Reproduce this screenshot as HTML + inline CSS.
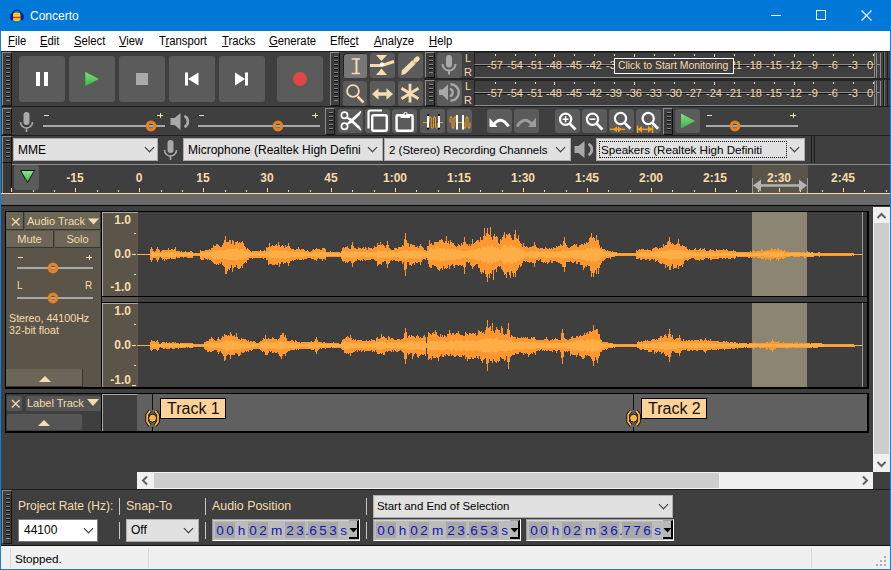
<!DOCTYPE html>
<html><head><meta charset="utf-8">
<style>
*{margin:0;padding:0;box-sizing:border-box}
html,body{width:891px;height:570px;overflow:hidden;background:#3f3f3f}
body{font-family:"Liberation Sans",sans-serif;position:relative}
.a{position:absolute}
.grab{position:absolute;width:10px;border-left:1px solid #8c8c8c;border-top:1px solid #8c8c8c;border-right:1px solid #141414;border-bottom:1px solid #141414;background-color:#3a3a3a;padding:3px 0 4px 0;
 background-image:linear-gradient(#8a8a8a 0,#8a8a8a 1px,#0a0a0a 1px,#0a0a0a 2px,transparent 2px);background-size:4px 4px;background-repeat:repeat-y;background-position:3px 0;background-origin:content-box;background-clip:content-box}
.menu span{position:absolute;top:35px;font-size:12px;color:#000;line-height:12px;transform:scaleX(0.94);transform-origin:0 0}
.lbl{color:#f6dcad}
.combo{position:absolute;background:#e1e1e1;border:1px solid #adadad;font-size:12px;color:#000;line-height:20px;padding-left:3px;white-space:nowrap;overflow:hidden}
.chev{position:absolute;width:7px;height:7px;border-right:1px solid #333;border-bottom:1px solid #333;transform:rotate(45deg)}
.tc{position:absolute;font-size:12px;color:#f6dcad;font-weight:bold;text-align:center;width:40px;line-height:12px}
</style></head><body>
<div class="a" style="left:0px;top:0px;width:891px;height:31px;background:#0078d7"></div><svg class="a" style="left:8px;top:7px" width="17" height="16" viewBox="0 0 17 16">
 <path d="M3.8 10.5A5.1 7.6 0 0 1 14 10.5" fill="none" stroke="#0c1c80" stroke-width="1.4"/>
 <rect x="5" y="5.8" width="7.4" height="8.2" rx="2.2" fill="#ffda10"/>
 <path d="M6 7.5H11.5M6 12.5H11.5" stroke="#ffc000" stroke-width="1"/>
 <path d="M5 10.5H12.4" stroke="#e83010" stroke-width="1.5"/>
 <ellipse cx="3.7" cy="10" rx="1.5" ry="3.4" fill="#0a1aa0"/>
 <ellipse cx="14.2" cy="10" rx="1.5" ry="3.4" fill="#0a1aa0"/>
</svg><div class="a" style="left:30px;top:10px;white-space:nowrap;font-size:12px;color:#fff;line-height:12px">Concerto</div><div class="a" style="left:771px;top:15px;width:10px;height:1px;background:#fff"></div><div class="a" style="left:816px;top:10px;width:10px;height:10px;border:1px solid #fff"></div><svg class="a" style="left:861px;top:10px" width="11" height="11"><path d="M0.5 0.5L10.5 10.5M10.5 0.5L0.5 10.5" stroke="#fff" stroke-width="1.1"/></svg><div class="a" style="left:0px;top:31px;width:891px;height:20px;background:#fff"></div><div class="menu">
<span style="left:8px"><u>F</u>ile</span>
<span style="left:40px"><u>E</u>dit</span>
<span style="left:74px"><u>S</u>elect</span>
<span style="left:119px"><u>V</u>iew</span>
<span style="left:159px">T<u>r</u>ansport</span>
<span style="left:222px"><u>T</u>racks</span>
<span style="left:269px"><u>G</u>enerate</span>
<span style="left:330px">Effe<u>c</u>t</span>
<span style="left:374px"><u>A</u>nalyze</span>
<span style="left:429px"><u>H</u>elp</span>
</div><div class="a" style="left:1px;top:51px;width:889px;height:1px;background:#1e1e1e"></div><div class="grab" style="left:2px;top:52px;height:54px"></div><div class="a" style="left:19px;top:56px;width:46px;height:46px;background:#5b5b5b;border-radius:3px"></div><div class="a" style="left:69px;top:56px;width:46px;height:46px;background:#5b5b5b;border-radius:3px"></div><div class="a" style="left:119px;top:56px;width:46px;height:46px;background:#5b5b5b;border-radius:3px"></div><div class="a" style="left:169px;top:56px;width:46px;height:46px;background:#5b5b5b;border-radius:3px"></div><div class="a" style="left:219px;top:56px;width:46px;height:46px;background:#5b5b5b;border-radius:3px"></div><div class="a" style="left:277px;top:56px;width:46px;height:46px;background:#5b5b5b;border-radius:3px"></div><div class="grab" style="left:330px;top:52px;height:54px"></div><div class="a" style="left:1px;top:106px;width:889px;height:1px;background:#1e1e1e"></div><div class="grab" style="left:2px;top:108px;height:27px"></div><div class="a" style="left:1px;top:135px;width:889px;height:1px;background:#1e1e1e"></div><div class="grab" style="left:2px;top:136px;height:27px"></div><div class="a" style="left:36px;top:72px;width:4px;height:14px;background:#fff"></div><div class="a" style="left:44px;top:72px;width:4px;height:14px;background:#fff"></div><svg class="a" style="left:84px;top:71px" width="17" height="17"><defs><linearGradient id="gp" x1="0" y1="0" x2="0" y2="1"><stop offset="0" stop-color="#80e080"/><stop offset="1" stop-color="#40b04a"/></linearGradient></defs><path d="M1 0.5 L15.5 8 L1 15.5Z" fill="url(#gp)" stroke="#2f7a36" stroke-width="0.6"/></svg><div class="a" style="left:136px;top:73px;width:12px;height:12px;background:#a9a9a9"></div><svg class="a" style="left:184px;top:72px" width="16" height="15"><rect x="1" y="0.5" width="3" height="13" fill="#fff"/><path d="M4 7 L14.5 0.5 L14.5 13.5Z" fill="#fff"/></svg><svg class="a" style="left:234px;top:72px" width="16" height="15"><rect x="11" y="0.5" width="3" height="13" fill="#fff"/><path d="M11 7 L1 0.5 L1 13.5Z" fill="#fff"/></svg><div class="a" style="left:293px;top:72px;width:14px;height:14px;border-radius:50%;background:#e24545"></div><div class="a" style="left:343px;top:53px;width:24px;height:25px;background:#777;border-radius:3px;box-shadow:inset 1px 1px 0 #222"></div><div class="a" style="left:370px;top:53px;width:25px;height:25px;background:#5b5b5b;border-radius:3px"></div><div class="a" style="left:398px;top:53px;width:25px;height:25px;background:#5b5b5b;border-radius:3px"></div><div class="a" style="left:343px;top:81px;width:24px;height:25px;background:#5b5b5b;border-radius:3px"></div><div class="a" style="left:370px;top:81px;width:25px;height:25px;background:#5b5b5b;border-radius:3px"></div><div class="a" style="left:398px;top:81px;width:25px;height:25px;background:#5b5b5b;border-radius:3px"></div><svg class="a" style="left:340px;top:50px" width="90" height="60" fill="#f6ddb0" stroke="#f6ddb0">
 <path d="M11.7 9H20.1M11.7 23.5H20.1" stroke-width="1.6" fill="none"/><path d="M16.5 8.5V24" stroke-width="2" fill="none"/>
 <path d="M36 5H47L41.5 11Z M36 25H47L41.5 18.6Z" stroke="none"/>
 <path d="M30 15.5H42L54 11.5" stroke-width="3" fill="none"/>
 <circle cx="42" cy="14.2" r="2" fill="#fff" stroke="none"/>
 <path d="M61.3 25.2L61.8 20.6L72.3 10.3L75.7 13.7L65.6 23.8Z" stroke="none"/>
 <path d="M75.6 10.4L77.4 8.6" stroke-width="4.6" stroke-linecap="round" fill="none"/>
 <circle cx="13" cy="41" r="5.9" fill="none" stroke-width="1.8"/>
 <path d="M17.5 46.5L23.5 52.5" stroke-width="2.5" fill="none"/>
 <path d="M32 44L38.5 38.2V49.8Z M53 44L46.5 38.2V49.8Z" stroke="none"/>
 <path d="M37 44H48" stroke-width="3.5" fill="none"/>
 <path d="M70 33.8V52.6M61.5 38.3L78.5 48.8M61.5 48.8L78.5 38.3" stroke-width="2.8" fill="none"/>
</svg><div class="grab" style="left:425px;top:52px;height:26px"></div><div class="grab" style="left:425px;top:80px;height:26px"></div><div class="a" style="left:424px;top:78px;width:466px;height:2px;background:#262626"></div><div class="a" style="left:437px;top:53px;width:25px;height:25px;background:#5b5b5b;border-radius:3px"></div><div class="a" style="left:437px;top:81px;width:25px;height:25px;background:#5b5b5b;border-radius:3px"></div><svg class="a" style="left:437px;top:53px" width="25" height="25" fill="#a9a9a9" stroke="#a9a9a9">
 <rect x="9" y="2" width="6" height="12.5" rx="3" stroke="none"/>
 <path d="M5.5 11 A6.5 6.5 0 0 0 18.5 11" fill="none" stroke-width="2"/>
 <path d="M12 17V21.5" stroke-width="2"/>
</svg>
<svg class="a" style="left:437px;top:81px" width="25" height="25" fill="#a9a9a9" stroke="#a9a9a9">
 <path d="M2 8.5H5.5L11 3.5V19.5L5.5 14H2Z" stroke="none"/>
 <path d="M12.8 7.8A3.8 3.8 0 0 1 12.8 15.2" fill="none" stroke-width="2.4"/>
 <path d="M13.5 3.2A8.3 8.3 0 0 1 13.5 19.8" fill="none" stroke-width="2.4"/>
</svg><div class="a" style="left:465px;top:53px;white-space:nowrap;font-size:11px;line-height:11px;color:#f6ddb0">L</div><div class="a" style="left:464px;top:67px;white-space:nowrap;font-size:11px;line-height:11px;color:#f6ddb0">R</div><div class="a" style="left:465px;top:81px;white-space:nowrap;font-size:11px;line-height:11px;color:#f6ddb0">L</div><div class="a" style="left:464px;top:95px;white-space:nowrap;font-size:11px;line-height:11px;color:#f6ddb0">R</div><div class="a" style="left:474px;top:52px;width:401px;height:13px;border-left:1px solid #222;border-top:1px solid #222;border-bottom:1px solid #8c8c8c;border-right:1px solid #8c8c8c;background:#3f3f3f"></div><div class="a" style="left:474px;top:65px;width:401px;height:13px;border-left:1px solid #222;border-top:1px solid #111;border-bottom:1px solid #8c8c8c;border-right:1px solid #8c8c8c;background:#3f3f3f"></div><div class="a" style="left:495px;top:54px;width:1px;height:2px;background:#f6ddb0"></div><div class="a lbl" style="left:480px;top:59px;width:30px;text-align:center;font-size:11px;line-height:12px">-57</div><div class="a" style="left:515px;top:54px;width:1px;height:2px;background:#f6ddb0"></div><div class="a lbl" style="left:500px;top:59px;width:30px;text-align:center;font-size:11px;line-height:12px">-54</div><div class="a" style="left:535px;top:54px;width:1px;height:2px;background:#f6ddb0"></div><div class="a lbl" style="left:520px;top:59px;width:30px;text-align:center;font-size:11px;line-height:12px">-51</div><div class="a" style="left:554px;top:54px;width:1px;height:3px;background:#f6ddb0"></div><div class="a lbl" style="left:539px;top:59px;width:30px;text-align:center;font-size:11px;line-height:12px">-48</div><div class="a" style="left:574px;top:54px;width:1px;height:2px;background:#f6ddb0"></div><div class="a lbl" style="left:559px;top:59px;width:30px;text-align:center;font-size:11px;line-height:12px">-45</div><div class="a" style="left:594px;top:54px;width:1px;height:2px;background:#f6ddb0"></div><div class="a lbl" style="left:579px;top:59px;width:30px;text-align:center;font-size:11px;line-height:12px">-42</div><div class="a" style="left:614px;top:54px;width:1px;height:2px;background:#f6ddb0"></div><div class="a lbl" style="left:599px;top:59px;width:30px;text-align:center;font-size:11px;line-height:12px">-39</div><div class="a" style="left:634px;top:54px;width:1px;height:3px;background:#f6ddb0"></div><div class="a lbl" style="left:619px;top:59px;width:30px;text-align:center;font-size:11px;line-height:12px">-36</div><div class="a" style="left:654px;top:54px;width:1px;height:2px;background:#f6ddb0"></div><div class="a lbl" style="left:639px;top:59px;width:30px;text-align:center;font-size:11px;line-height:12px">-33</div><div class="a" style="left:674px;top:54px;width:1px;height:2px;background:#f6ddb0"></div><div class="a lbl" style="left:659px;top:59px;width:30px;text-align:center;font-size:11px;line-height:12px">-30</div><div class="a" style="left:694px;top:54px;width:1px;height:2px;background:#f6ddb0"></div><div class="a lbl" style="left:679px;top:59px;width:30px;text-align:center;font-size:11px;line-height:12px">-27</div><div class="a" style="left:714px;top:54px;width:1px;height:3px;background:#f6ddb0"></div><div class="a lbl" style="left:699px;top:59px;width:30px;text-align:center;font-size:11px;line-height:12px">-24</div><div class="a" style="left:734px;top:54px;width:1px;height:2px;background:#f6ddb0"></div><div class="a lbl" style="left:719px;top:59px;width:30px;text-align:center;font-size:11px;line-height:12px">-21</div><div class="a" style="left:754px;top:54px;width:1px;height:2px;background:#f6ddb0"></div><div class="a lbl" style="left:739px;top:59px;width:30px;text-align:center;font-size:11px;line-height:12px">-18</div><div class="a" style="left:774px;top:54px;width:1px;height:2px;background:#f6ddb0"></div><div class="a lbl" style="left:759px;top:59px;width:30px;text-align:center;font-size:11px;line-height:12px">-15</div><div class="a" style="left:794px;top:54px;width:1px;height:3px;background:#f6ddb0"></div><div class="a lbl" style="left:779px;top:59px;width:30px;text-align:center;font-size:11px;line-height:12px">-12</div><div class="a" style="left:813px;top:54px;width:1px;height:2px;background:#f6ddb0"></div><div class="a lbl" style="left:798px;top:59px;width:30px;text-align:center;font-size:11px;line-height:12px">-9</div><div class="a" style="left:833px;top:54px;width:1px;height:2px;background:#f6ddb0"></div><div class="a lbl" style="left:818px;top:59px;width:30px;text-align:center;font-size:11px;line-height:12px">-6</div><div class="a" style="left:853px;top:54px;width:1px;height:2px;background:#f6ddb0"></div><div class="a lbl" style="left:838px;top:59px;width:30px;text-align:center;font-size:11px;line-height:12px">-3</div><div class="a" style="left:873px;top:54px;width:1px;height:2px;background:#f6ddb0"></div><div class="a lbl" style="left:855px;top:59px;width:30px;text-align:center;font-size:11px;line-height:12px">0</div><div class="a" style="left:474px;top:80px;width:401px;height:13px;border-left:1px solid #222;border-top:1px solid #222;border-bottom:1px solid #8c8c8c;border-right:1px solid #8c8c8c;background:#3f3f3f"></div><div class="a" style="left:474px;top:93px;width:401px;height:13px;border-left:1px solid #222;border-top:1px solid #111;border-bottom:1px solid #8c8c8c;border-right:1px solid #8c8c8c;background:#3f3f3f"></div><div class="a" style="left:495px;top:82px;width:1px;height:2px;background:#f6ddb0"></div><div class="a lbl" style="left:480px;top:87px;width:30px;text-align:center;font-size:11px;line-height:12px">-57</div><div class="a" style="left:515px;top:82px;width:1px;height:2px;background:#f6ddb0"></div><div class="a lbl" style="left:500px;top:87px;width:30px;text-align:center;font-size:11px;line-height:12px">-54</div><div class="a" style="left:535px;top:82px;width:1px;height:2px;background:#f6ddb0"></div><div class="a lbl" style="left:520px;top:87px;width:30px;text-align:center;font-size:11px;line-height:12px">-51</div><div class="a" style="left:554px;top:82px;width:1px;height:3px;background:#f6ddb0"></div><div class="a lbl" style="left:539px;top:87px;width:30px;text-align:center;font-size:11px;line-height:12px">-48</div><div class="a" style="left:574px;top:82px;width:1px;height:2px;background:#f6ddb0"></div><div class="a lbl" style="left:559px;top:87px;width:30px;text-align:center;font-size:11px;line-height:12px">-45</div><div class="a" style="left:594px;top:82px;width:1px;height:2px;background:#f6ddb0"></div><div class="a lbl" style="left:579px;top:87px;width:30px;text-align:center;font-size:11px;line-height:12px">-42</div><div class="a" style="left:614px;top:82px;width:1px;height:2px;background:#f6ddb0"></div><div class="a lbl" style="left:599px;top:87px;width:30px;text-align:center;font-size:11px;line-height:12px">-39</div><div class="a" style="left:634px;top:82px;width:1px;height:3px;background:#f6ddb0"></div><div class="a lbl" style="left:619px;top:87px;width:30px;text-align:center;font-size:11px;line-height:12px">-36</div><div class="a" style="left:654px;top:82px;width:1px;height:2px;background:#f6ddb0"></div><div class="a lbl" style="left:639px;top:87px;width:30px;text-align:center;font-size:11px;line-height:12px">-33</div><div class="a" style="left:674px;top:82px;width:1px;height:2px;background:#f6ddb0"></div><div class="a lbl" style="left:659px;top:87px;width:30px;text-align:center;font-size:11px;line-height:12px">-30</div><div class="a" style="left:694px;top:82px;width:1px;height:2px;background:#f6ddb0"></div><div class="a lbl" style="left:679px;top:87px;width:30px;text-align:center;font-size:11px;line-height:12px">-27</div><div class="a" style="left:714px;top:82px;width:1px;height:3px;background:#f6ddb0"></div><div class="a lbl" style="left:699px;top:87px;width:30px;text-align:center;font-size:11px;line-height:12px">-24</div><div class="a" style="left:734px;top:82px;width:1px;height:2px;background:#f6ddb0"></div><div class="a lbl" style="left:719px;top:87px;width:30px;text-align:center;font-size:11px;line-height:12px">-21</div><div class="a" style="left:754px;top:82px;width:1px;height:2px;background:#f6ddb0"></div><div class="a lbl" style="left:739px;top:87px;width:30px;text-align:center;font-size:11px;line-height:12px">-18</div><div class="a" style="left:774px;top:82px;width:1px;height:2px;background:#f6ddb0"></div><div class="a lbl" style="left:759px;top:87px;width:30px;text-align:center;font-size:11px;line-height:12px">-15</div><div class="a" style="left:794px;top:82px;width:1px;height:3px;background:#f6ddb0"></div><div class="a lbl" style="left:779px;top:87px;width:30px;text-align:center;font-size:11px;line-height:12px">-12</div><div class="a" style="left:813px;top:82px;width:1px;height:2px;background:#f6ddb0"></div><div class="a lbl" style="left:798px;top:87px;width:30px;text-align:center;font-size:11px;line-height:12px">-9</div><div class="a" style="left:833px;top:82px;width:1px;height:2px;background:#f6ddb0"></div><div class="a lbl" style="left:818px;top:87px;width:30px;text-align:center;font-size:11px;line-height:12px">-6</div><div class="a" style="left:853px;top:82px;width:1px;height:2px;background:#f6ddb0"></div><div class="a lbl" style="left:838px;top:87px;width:30px;text-align:center;font-size:11px;line-height:12px">-3</div><div class="a" style="left:873px;top:82px;width:1px;height:2px;background:#f6ddb0"></div><div class="a lbl" style="left:855px;top:87px;width:30px;text-align:center;font-size:11px;line-height:12px">0</div><div class="a" style="left:876px;top:53px;width:1px;height:25px;background:#8c8c8c"></div><div class="a" style="left:880px;top:53px;width:1px;height:25px;background:#8c8c8c"></div><div class="a" style="left:876px;top:64px;width:4px;height:1px;background:#8c8c8c"></div><div class="a" style="left:883px;top:52px;width:1px;height:26px;background:#1e1e1e"></div><div class="a" style="left:884px;top:52px;width:1px;height:26px;background:#6a6a6a"></div><div class="a" style="left:887px;top:52px;width:1px;height:26px;background:#1e1e1e"></div><div class="a" style="left:876px;top:81px;width:1px;height:25px;background:#8c8c8c"></div><div class="a" style="left:880px;top:81px;width:1px;height:25px;background:#8c8c8c"></div><div class="a" style="left:876px;top:92px;width:4px;height:1px;background:#8c8c8c"></div><div class="a" style="left:883px;top:80px;width:1px;height:26px;background:#1e1e1e"></div><div class="a" style="left:884px;top:80px;width:1px;height:26px;background:#6a6a6a"></div><div class="a" style="left:887px;top:80px;width:1px;height:26px;background:#1e1e1e"></div><div class="a" style="left:614px;top:58px;width:120px;height:16px;background:#3f3f3f;border:1px solid #fff"></div><div class="a" style="left:618px;top:60px;white-space:nowrap;font-size:10.4px;line-height:12px;color:#f6ddb0">Click to Start Monitoring</div><svg class="a" style="left:17px;top:110px" width="20" height="24" fill="#a9a9a9" stroke="#a9a9a9">
 <rect x="6.5" y="2" width="6" height="13" rx="3" stroke="none"/>
 <path d="M3.5 12 A6 6 0 0 0 15.5 12" fill="none" stroke-width="1.6"/>
 <path d="M9.5 18V22" stroke-width="1.6"/>
</svg><div class="a" style="left:43px;top:125px;width:122px;height:2px;background:#a9a9a9"></div><div class="a" style="left:44px;top:115px;width:5px;height:1px;background:#f6ddb0"></div><div class="a" style="left:157px;top:115px;width:6px;height:1px;background:#f6ddb0"></div><div class="a" style="left:160px;top:113px;width:1px;height:5px;background:#f6ddb0"></div><svg class="a" style="left:145px;top:120px" width="12" height="12"><circle cx="6" cy="6" r="3.9" fill="none" stroke="#e8821e" stroke-width="3.1"/><path d="M4.2 6.5H7.8" stroke="#a9a9a9" stroke-width="2"/></svg><svg class="a" style="left:168px;top:110px" width="24" height="24" fill="#a9a9a9" stroke="#a9a9a9">
 <path d="M2.5 8H6.5L12.5 3V20L6.5 15H2.5Z" stroke="none"/>
 <path d="M16.5 5.8A6.5 6.5 0 0 1 16.5 17.2" fill="none" stroke-width="2.6"/>
</svg><div class="a" style="left:198px;top:125px;width:122px;height:2px;background:#a9a9a9"></div><div class="a" style="left:199px;top:115px;width:5px;height:1px;background:#f6ddb0"></div><div class="a" style="left:312px;top:115px;width:6px;height:1px;background:#f6ddb0"></div><div class="a" style="left:315px;top:113px;width:1px;height:5px;background:#f6ddb0"></div><svg class="a" style="left:272px;top:120px" width="12" height="12"><circle cx="6" cy="6" r="3.9" fill="none" stroke="#e8821e" stroke-width="3.1"/><path d="M4.2 6.5H7.8" stroke="#a9a9a9" stroke-width="2"/></svg><div class="grab" style="left:325px;top:108px;height:27px"></div><div class="a" style="left:338px;top:109px;width:25px;height:24px;background:#5b5b5b;border-radius:3px"></div><div class="a" style="left:365px;top:109px;width:25px;height:24px;background:#5b5b5b;border-radius:3px"></div><div class="a" style="left:392px;top:109px;width:25px;height:24px;background:#5b5b5b;border-radius:3px"></div><div class="a" style="left:420px;top:109px;width:25px;height:24px;background:#5b5b5b;border-radius:3px"></div><div class="a" style="left:447px;top:109px;width:25px;height:24px;background:#5b5b5b;border-radius:3px"></div><div class="a" style="left:487px;top:109px;width:25px;height:24px;background:#5b5b5b;border-radius:3px"></div><div class="a" style="left:514px;top:109px;width:25px;height:24px;background:#5b5b5b;border-radius:3px"></div><div class="a" style="left:555px;top:109px;width:25px;height:24px;background:#5b5b5b;border-radius:3px"></div><div class="a" style="left:582px;top:109px;width:25px;height:24px;background:#5b5b5b;border-radius:3px"></div><div class="a" style="left:609px;top:109px;width:25px;height:24px;background:#5b5b5b;border-radius:3px"></div><div class="a" style="left:636px;top:109px;width:25px;height:24px;background:#5b5b5b;border-radius:3px"></div><svg class="a" style="left:336px;top:107px" width="340" height="28" fill="none" stroke="#fff">
 <circle cx="8.5" cy="19.3" r="3.1" stroke-width="1.7"/>
 <circle cx="8.5" cy="8.3" r="3.1" stroke-width="1.7"/>
 <path d="M10.8 17.2L12.5 15.5L24.5 4.8L23.2 7.5L14.5 15.8Z M10.8 10.4L12.5 12L24.5 22.8L23.2 20L14.5 11.8Z" fill="#fff" stroke="#fff" stroke-width="1.4" stroke-linejoin="round"/>
 <path d="M32.5 21.5V5.5Q32.5 3.5 34.5 3.5H46" stroke-width="2.2"/>
 <rect x="36.2" y="8.2" width="14.6" height="15.6" rx="1.5" stroke-width="2.4"/>
 <rect x="60.6" y="8.2" width="16" height="15.6" rx="1" stroke-width="2.4"/>
 <path d="M64.5 11V7.2H67.3A2.2 2.2 0 0 1 71.7 7.2H74V11Z" fill="#fff" stroke="none"/><circle cx="69.5" cy="6.8" r="1" fill="#5b5b5b" stroke="none"/>
 <path d="M153.5 11V20H161.5Z" fill="#fff" stroke="none"/>
 <path d="M157.5 17.5Q165 8 172.5 19.5" stroke-width="3"/>
 <path d="M200 10.5V20H192Z" fill="#9c9c9c" stroke="none"/>
 <path d="M196 17.5Q188.5 8 181 19.5" stroke="#9c9c9c" stroke-width="3"/>
 <circle cx="229.6" cy="12.2" r="5.6" stroke-width="2.2"/><path d="M233.8 16.6L239.5 22.5" stroke-width="2.8"/><path d="M226.6 12.2H232.6M229.6 9.2V15.2" stroke-width="1.6"/>
 <circle cx="256.5" cy="12.2" r="5.6" stroke-width="2.2"/><path d="M260.7 16.6L266.4 22.5" stroke-width="2.8"/><path d="M253.5 12.2H259.5" stroke-width="1.6"/>
 <circle cx="284.5" cy="11.5" r="5.6" stroke-width="2.2"/><path d="M288.7 15.9L294.4 21.8" stroke-width="2.8"/>
 <circle cx="312.2" cy="11.5" r="5.6" stroke-width="2.2"/><path d="M316.4 15.9L322.1 21.8" stroke-width="2.8"/>
 <path d="M273.8 22.3H289" stroke="#f4a020" stroke-width="1.3"/><path d="M277 22.3L281 19.3V25.3Z M286 22.3L282 19.3V25.3Z" fill="#f4a020" stroke="none"/>
 <path d="M302 22.3H316" stroke="#f4a020" stroke-width="1.5"/><path d="M301.5 18.5V26M316.5 18.5V26" stroke="#f4a020" stroke-width="1.5"/><path d="M301.5 22.3L306 19V25.6Z M316.5 22.3L312 19V25.6Z" fill="#f4a020" stroke="none"/>
</svg>
<svg class="a" style="left:420px;top:109px" width="52" height="24" fill="none">
 <path d="M3 13.5H8M20 13.5H23" stroke="#f4a020" stroke-width="1"/>
 <path d="M8 13.5H20" stroke="#3a3a7a" stroke-width="1"/>
 <path d="M9 13.5V9L10.2 7.5L11.2 9V18L12.3 19.5L13.4 18V9L14.5 7.5L15.5 9V18L16.6 19.5L17.7 18V13.5" stroke="#f4a020" stroke-width="1"/>
 <path d="M8 6.5V19M19 6.5V19" stroke="#fff" stroke-width="2"/>
 <circle cx="8" cy="6" r="1" fill="#000"/><circle cx="19" cy="6" r="1" fill="#000"/><circle cx="8" cy="19.5" r="1" fill="#000"/><circle cx="19" cy="19.5" r="1" fill="#000"/>
 <path d="M30 13.5V9L31 7.5L32 9V18L33 19.5L34 18V9L35 7.5L36 9V13.5" stroke="#f4a020" stroke-width="1"/>
 <path d="M44 13.5V18L45 19.5L46 18V9L47 7.5L48 9V18L49 19.5L50 18V13.5" stroke="#f4a020" stroke-width="1"/>
 <path d="M38 13.5H43" stroke="#f4a020" stroke-width="1"/>
 <path d="M37 6V20.5M43 6V20.5" stroke="#fff" stroke-width="2"/>
</svg><div class="grab" style="left:663px;top:108px;height:27px"></div><div class="a" style="left:675px;top:109px;width:25px;height:24px;background:#5b5b5b;border-radius:3px"></div><svg class="a" style="left:675px;top:109px" width="25" height="24"><defs><linearGradient id="gp2" x1="0" y1="0" x2="0" y2="1"><stop offset="0" stop-color="#80e080"/><stop offset="1" stop-color="#40b04a"/></linearGradient></defs><path d="M6 4.5L20 12L6 19.5Z" fill="url(#gp2)"/></svg><div class="a" style="left:706px;top:125px;width:92px;height:2px;background:#a9a9a9"></div><div class="a" style="left:707px;top:115px;width:5px;height:1px;background:#f6ddb0"></div><div class="a" style="left:790px;top:115px;width:6px;height:1px;background:#f6ddb0"></div><div class="a" style="left:793px;top:113px;width:1px;height:5px;background:#f6ddb0"></div><svg class="a" style="left:729px;top:120px" width="12" height="12"><circle cx="6" cy="6" r="3.9" fill="none" stroke="#e8821e" stroke-width="3.1"/><path d="M4.2 6.5H7.8" stroke="#a9a9a9" stroke-width="2"/></svg><div class="combo" style="left:13px;top:138px;width:145px;height:23px;padding-left:4px;line-height:22px">MME</div><div class="chev" style="left:146px;top:144px"></div><svg class="a" style="left:161px;top:139px" width="20" height="22" fill="#a9a9a9" stroke="#a9a9a9">
 <rect x="6.5" y="1" width="6" height="13" rx="3" stroke="none"/>
 <path d="M3.5 11 A6 6 0 0 0 15.5 11" fill="none" stroke-width="1.6"/>
 <path d="M9.5 17V21" stroke-width="1.6"/>
</svg><div class="combo" style="left:183px;top:138px;width:200px;height:23px;padding-left:4px;line-height:22px">Microphone (Realtek High Defini</div><div class="chev" style="left:369px;top:144px"></div><div class="combo" style="left:384px;top:138px;width:187px;height:23px;padding-left:4px;line-height:22px;font-size:11.5px">2 (Stereo) Recording Channels</div><div class="chev" style="left:557px;top:144px"></div><svg class="a" style="left:572px;top:139px" width="24" height="22" fill="#a9a9a9" stroke="#a9a9a9">
 <path d="M2.5 7H6.5L12.5 2V19L6.5 14H2.5Z" stroke="none"/>
 <path d="M16.5 4.8A6.5 6.5 0 0 1 16.5 16.2" fill="none" stroke-width="2.6"/>
</svg><div class="combo" style="left:596px;top:138px;width:209px;height:23px;padding-left:4px;line-height:22px;font-size:11.6px">Speakers (Realtek High Definiti</div><div class="a" style="left:599px;top:141px;width:188px;height:17px;border:1px dotted #000"></div><div class="chev" style="left:791px;top:144px"></div><div class="a" style="left:811px;top:136px;width:1px;height:27px;background:#1a1a1a"></div><div class="a" style="left:814px;top:136px;width:1px;height:27px;background:#1a1a1a"></div><div class="a" style="left:1px;top:163px;width:889px;height:30px;background:#3f3f3f"></div><div class="a" style="left:12px;top:164px;width:878px;height:1px;background:#8c8c8c"></div><div class="a" style="left:2px;top:163px;width:10px;height:30px;background:#373737;border-left:1px solid #8c8c8c;border-right:1px solid #141414"></div><div class="a" style="left:752px;top:165px;width:56px;height:28px;background:#59554a"></div><div class="a" style="left:14px;top:165px;width:25px;height:25px;background:#5b5b5b;border-radius:3px"></div><svg class="a" style="left:19px;top:169px" width="18" height="15"><defs><linearGradient id="gp3" x1="0" y1="0" x2="0" y2="1"><stop offset="0" stop-color="#8ae88a"/><stop offset="1" stop-color="#40b04a"/></linearGradient></defs><path d="M1.5 1.5H15.5L8.5 13.5Z" fill="url(#gp3)" stroke="#111" stroke-width="1"/></svg><div class="a" style="left:1px;top:193px;width:889px;height:1px;background:#f5d7a8"></div><div class="a" style="left:1px;top:194px;width:889px;height:11px;background:#6a6a6a"></div><div class="a" style="left:1px;top:205px;width:889px;height:1px;background:#050505"></div><div class="a" style="left:11px;top:188px;width:1px;height:4px;background:#f5d7a8"></div><div class="a" style="left:33px;top:190px;width:1px;height:2px;background:#f5d7a8"></div><div class="a" style="left:54px;top:190px;width:1px;height:2px;background:#f5d7a8"></div><div class="a" style="left:75px;top:188px;width:1px;height:4px;background:#f5d7a8"></div><div class="a" style="left:97px;top:190px;width:1px;height:2px;background:#f5d7a8"></div><div class="a" style="left:118px;top:190px;width:1px;height:2px;background:#f5d7a8"></div><div class="a" style="left:139px;top:188px;width:1px;height:4px;background:#f5d7a8"></div><div class="a" style="left:161px;top:190px;width:1px;height:2px;background:#f5d7a8"></div><div class="a" style="left:182px;top:190px;width:1px;height:2px;background:#f5d7a8"></div><div class="a" style="left:203px;top:188px;width:1px;height:4px;background:#f5d7a8"></div><div class="a" style="left:225px;top:190px;width:1px;height:2px;background:#f5d7a8"></div><div class="a" style="left:246px;top:190px;width:1px;height:2px;background:#f5d7a8"></div><div class="a" style="left:267px;top:188px;width:1px;height:4px;background:#f5d7a8"></div><div class="a" style="left:288px;top:190px;width:1px;height:2px;background:#f5d7a8"></div><div class="a" style="left:310px;top:190px;width:1px;height:2px;background:#f5d7a8"></div><div class="a" style="left:331px;top:188px;width:1px;height:4px;background:#f5d7a8"></div><div class="a" style="left:352px;top:190px;width:1px;height:2px;background:#f5d7a8"></div><div class="a" style="left:374px;top:190px;width:1px;height:2px;background:#f5d7a8"></div><div class="a" style="left:395px;top:188px;width:1px;height:4px;background:#f5d7a8"></div><div class="a" style="left:416px;top:190px;width:1px;height:2px;background:#f5d7a8"></div><div class="a" style="left:438px;top:190px;width:1px;height:2px;background:#f5d7a8"></div><div class="a" style="left:459px;top:188px;width:1px;height:4px;background:#f5d7a8"></div><div class="a" style="left:480px;top:190px;width:1px;height:2px;background:#f5d7a8"></div><div class="a" style="left:502px;top:190px;width:1px;height:2px;background:#f5d7a8"></div><div class="a" style="left:523px;top:188px;width:1px;height:4px;background:#f5d7a8"></div><div class="a" style="left:544px;top:190px;width:1px;height:2px;background:#f5d7a8"></div><div class="a" style="left:566px;top:190px;width:1px;height:2px;background:#f5d7a8"></div><div class="a" style="left:587px;top:188px;width:1px;height:4px;background:#f5d7a8"></div><div class="a" style="left:608px;top:190px;width:1px;height:2px;background:#f5d7a8"></div><div class="a" style="left:630px;top:190px;width:1px;height:2px;background:#f5d7a8"></div><div class="a" style="left:651px;top:188px;width:1px;height:4px;background:#f5d7a8"></div><div class="a" style="left:672px;top:190px;width:1px;height:2px;background:#f5d7a8"></div><div class="a" style="left:694px;top:190px;width:1px;height:2px;background:#f5d7a8"></div><div class="a" style="left:715px;top:188px;width:1px;height:4px;background:#f5d7a8"></div><div class="a" style="left:736px;top:190px;width:1px;height:2px;background:#f5d7a8"></div><div class="a" style="left:758px;top:190px;width:1px;height:2px;background:#f5d7a8"></div><div class="a" style="left:779px;top:188px;width:1px;height:4px;background:#f5d7a8"></div><div class="a" style="left:800px;top:190px;width:1px;height:2px;background:#f5d7a8"></div><div class="a" style="left:822px;top:190px;width:1px;height:2px;background:#f5d7a8"></div><div class="a" style="left:843px;top:188px;width:1px;height:4px;background:#f5d7a8"></div><div class="a" style="left:864px;top:190px;width:1px;height:2px;background:#f5d7a8"></div><div class="a" style="left:886px;top:190px;width:1px;height:2px;background:#f5d7a8"></div><div class="tc" style="left:55px;top:172px">-15</div><div class="tc" style="left:119px;top:172px">0</div><div class="tc" style="left:183px;top:172px">15</div><div class="tc" style="left:247px;top:172px">30</div><div class="tc" style="left:311px;top:172px">45</div><div class="tc" style="left:375px;top:172px">1:00</div><div class="tc" style="left:439px;top:172px">1:15</div><div class="tc" style="left:503px;top:172px">1:30</div><div class="tc" style="left:567px;top:172px">1:45</div><div class="tc" style="left:631px;top:172px">2:00</div><div class="tc" style="left:695px;top:172px">2:15</div><div class="tc" style="left:759px;top:172px">2:30</div><div class="tc" style="left:823px;top:172px">2:45</div><svg class="a" style="left:751px;top:178px" width="59" height="15">
 <path d="M1.5 0V15M56.5 0V15" stroke="#9a9a9a" stroke-width="1"/>
 <path d="M8 7.5H50" stroke="#b4b4b4" stroke-width="2.5"/>
 <path d="M2 7.5L10 1.5V13.5Z M56 7.5L48 1.5V13.5Z" fill="#b4b4b4"/>
</svg><div class="a" style="left:5px;top:211px;width:864px;height:178px;background:#000"></div><div class="a" style="left:6px;top:212px;width:95px;height:175px;background:#5a5548"></div><div class="a" style="left:102px;top:212px;width:36px;height:84px;background:#5a5548;border-left:1px solid #a9a9a9;border-top:1px solid #a9a9a9"></div><div class="a" style="left:102px;top:296px;width:36px;height:7px;background:#5a5548;border-top:1px solid #000;border-bottom:1px solid #000"></div><div class="a" style="left:102px;top:303px;width:36px;height:84px;background:#5a5548;border-left:1px solid #a9a9a9;border-top:1px solid #a9a9a9"></div><div class="a" style="left:138px;top:212px;width:729px;height:84px;background:#3f3f3f"></div><div class="a" style="left:138px;top:297px;width:729px;height:5px;background:#3f3f3f"></div><div class="a" style="left:138px;top:303px;width:729px;height:84px;background:#3f3f3f"></div><div class="a" style="left:752px;top:212px;width:55px;height:84px;background:#8b8572"></div><div class="a" style="left:752px;top:303px;width:55px;height:84px;background:#8b8572"></div><div class="a" style="left:862px;top:212px;width:1px;height:84px;background:#9a9a9a"></div><div class="a" style="left:863px;top:212px;width:4px;height:84px;background:#363636"></div><div class="a" style="left:862px;top:303px;width:1px;height:84px;background:#9a9a9a"></div><div class="a" style="left:863px;top:303px;width:4px;height:84px;background:#363636"></div><div class="a" style="left:867px;top:211px;width:2px;height:178px;background:#000"></div><div class="a" style="left:6px;top:212px;width:18px;height:18px;background:#6b6657;border-right:1px solid #38352d;border-bottom:1px solid #38352d"></div><svg class="a" style="left:11px;top:217px" width="10" height="10"><path d="M1 1L8.5 8.5M8.5 1L1 8.5" stroke="#f6ddb0" stroke-width="1.3"/></svg><div class="a" style="left:25px;top:212px;width:76px;height:18px;background:#6b6657;border-right:1px solid #38352d;border-bottom:1px solid #38352d"></div><div class="a" style="left:27px;top:215px;white-space:nowrap;font-size:11px;line-height:12px;color:#f6ddb0">Audio Track</div><svg class="a" style="left:88px;top:218px" width="11" height="7"><path d="M0 0.5H11L5.5 6.5Z" fill="#f6ddb0"/></svg><div class="a" style="left:6px;top:231px;width:48px;height:17px;background:#6b6657;border-right:1px solid #38352d;border-bottom:1px solid #38352d"></div><div class="a lbl" style="left:6px;top:233px;width:47px;text-align:center;font-size:11px;line-height:12px">Mute</div><div class="a" style="left:55px;top:231px;width:46px;height:17px;background:#6b6657;border-right:1px solid #38352d;border-bottom:1px solid #38352d"></div><div class="a lbl" style="left:55px;top:233px;width:45px;text-align:center;font-size:11px;line-height:12px">Solo</div><div class="a" style="left:17px;top:267px;width:76px;height:2px;background:#a9a9a9"></div><div class="a" style="left:18px;top:257px;width:5px;height:1px;background:#f6ddb0"></div><div class="a" style="left:86px;top:257px;width:6px;height:1px;background:#f6ddb0"></div><div class="a" style="left:89px;top:255px;width:1px;height:5px;background:#f6ddb0"></div><svg class="a" style="left:47px;top:262px" width="12" height="12"><circle cx="6" cy="6" r="3.9" fill="none" stroke="#e8821e" stroke-width="3.1"/><path d="M4.2 6.5H7.8" stroke="#a9a9a9" stroke-width="2"/></svg><div class="a" style="left:17px;top:281px;white-space:nowrap;font-size:10px;line-height:10px;color:#f6ddb0">L</div><div class="a" style="left:85px;top:281px;white-space:nowrap;font-size:10px;line-height:10px;color:#f6ddb0">R</div><div class="a" style="left:17px;top:297px;width:76px;height:2px;background:#a9a9a9"></div><div class="a" style="left:-100px;top:2px;width:5px;height:1px;background:#f6ddb0"></div><div class="a" style="left:-100px;top:2px;width:0px;height:1px;background:#f6ddb0"></div><div class="a" style="left:-100px;top:0px;width:1px;height:5px;background:#f6ddb0"></div><svg class="a" style="left:47px;top:292px" width="12" height="12"><circle cx="6" cy="6" r="3.9" fill="none" stroke="#e8821e" stroke-width="3.1"/><path d="M4.2 6.5H7.8" stroke="#a9a9a9" stroke-width="2"/></svg><div class="a" style="left:9px;top:312px;white-space:nowrap;font-size:10.7px;line-height:12px;color:#f6ddb0">Stereo, 44100Hz<br>32-bit float</div><div class="a" style="left:6px;top:369px;width:77px;height:18px;background:#6b6657;border-right:1px solid #38352d;border-bottom:1px solid #38352d"></div><svg class="a" style="left:39px;top:375px" width="12" height="7"><path d="M0 7H12L6 1Z" fill="#f6ddb0"/></svg><div class="a lbl" style="left:97px;top:214px;width:34px;text-align:right;font-size:12px;font-weight:bold;line-height:12px">1.0</div><div class="a lbl" style="left:97px;top:248px;width:34px;text-align:right;font-size:12px;font-weight:bold;line-height:12px">0.0</div><div class="a lbl" style="left:97px;top:281px;width:34px;text-align:right;font-size:12px;font-weight:bold;line-height:12px">-1.0</div><div class="a" style="left:132px;top:254px;width:4px;height:1px;background:#f6ddb0"></div><div class="a" style="left:134px;top:233px;width:2px;height:1px;background:#f6ddb0"></div><div class="a" style="left:134px;top:274px;width:2px;height:1px;background:#f6ddb0"></div><div class="a lbl" style="left:97px;top:305px;width:34px;text-align:right;font-size:12px;font-weight:bold;line-height:12px">1.0</div><div class="a lbl" style="left:97px;top:339px;width:34px;text-align:right;font-size:12px;font-weight:bold;line-height:12px">0.0</div><div class="a lbl" style="left:97px;top:374px;width:34px;text-align:right;font-size:12px;font-weight:bold;line-height:12px">-1.0</div><div class="a" style="left:132px;top:345px;width:4px;height:1px;background:#f6ddb0"></div><div class="a" style="left:134px;top:324px;width:2px;height:1px;background:#f6ddb0"></div><div class="a" style="left:134px;top:365px;width:2px;height:1px;background:#f6ddb0"></div><div class="a" style="left:132px;top:385px;width:4px;height:1px;background:#f6ddb0"></div><svg style="position:absolute;left:0;top:0" width="891" height="570" shape-rendering="crispEdges"><path fill="#fe9730" d="M137 254H150V249H151V247H152V249H153V251H154V252H155V251H156V249H157V247H158V249H159V250H160V252H161V251H162V250H168V248H169V250H171V249H173V250H174V249H175V247H176V251H180V252H181V251H182V252H185V251H186V252H190V251H192V252H193V253H200V250H201V251H205V250H209V249H210V250H211V248H213V245H214V246H216V244H218V245H219V246H220V247H222V245H223V243H224V240H225V236H226V242H229V240H231V244H232V240H233V241H234V245H235V242H237V241H238V243H239V242H240V243H241V242H242V241H243V243H244V246H245V247H246V249H247V248H248V249H249V250H250V251H251V252H252V251H260V250H261V251H264V250H265V251H266V247H267V248H268V247H269V243H270V247H271V246H272V245H273V246H275V245H276V244H277V246H278V242H279V245H280V247H281V246H282V245H283V246H284V248H285V245H286V247H287V246H288V243H289V246H290V248H291V249H294V250H296V249H298V247H299V249H300V250H301V249H304V250H305V251H307V250H308V251H309V252H311V251H312V250H313V249H314V250H315V249H316V248H317V249H320V250H322V248H325V249H326V252H330V251H331V252H340V253H341V251H342V248H343V247H344V248H345V247H347V246H348V248H349V249H351V245H352V242H353V246H354V248H356V249H358V247H359V248H361V249H362V248H363V247H364V249H365V247H366V248H367V250H368V247H369V248H372V249H373V248H374V246H375V247H377V243H378V245H380V242H381V245H382V244H383V245H384V246H385V248H386V245H387V241H388V245H389V248H390V249H391V250H394V248H397V249H398V247H402V245H403V246H404V239H405V233H406V240H407V243H409V247H410V244H412V245H415V247H417V246H418V248H419V246H420V244H421V246H422V247H423V248H424V250H426V251H427V246H429V240H430V244H431V243H432V245H434V242H439V240H441V239H442V240H443V242H444V243H445V241H446V236H447V243H448V241H449V244H450V240H451V242H452V243H454V245H455V246H456V247H457V246H458V244H459V245H460V246H461V243H462V245H463V242H464V237H465V242H466V244H468V246H469V244H470V246H471V244H472V239H473V244H474V243H475V242H476V241H477V240H479V242H480V237H481V240H483V236H484V228H485V236H486V233H487V228H488V234H489V235H490V227H491V237H492V240H493V236H494V234H495V237H496V236H497V237H498V243H499V244H500V239H501V240H502V237H503V235H504V232H505V238H506V234H507V235H508V234H509V233H510V235H511V238H512V240H514V234H515V230H516V238H517V239H518V235H519V241H520V243H521V244H522V247H523V243H524V246H525V247H526V246H527V247H528V248H529V247H532V246H534V242H535V245H536V247H537V248H539V249H540V248H543V249H545V247H546V248H547V249H549V248H550V249H551V248H552V249H553V247H554V248H556V246H557V247H558V246H560V244H561V245H562V246H563V241H564V237H565V243H566V245H567V247H568V248H570V247H571V246H573V245H574V244H575V245H576V244H577V247H579V245H581V244H583V245H584V243H585V244H586V242H587V243H588V242H589V238H590V237H591V233H592V238H593V237H594V238H595V241H596V235H597V240H599V245H600V248H601V247H602V249H605V250H606V251H607V250H608V251H611V252H612V251H613V252H617V253H636V250H637V251H638V250H639V249H640V250H641V249H644V250H647V249H648V250H651V251H652V249H653V248H655V247H657V248H658V249H659V248H661V247H662V248H663V244H664V246H665V245H667V242H668V241H669V237H670V242H671V244H672V243H673V244H674V245H676V244H677V243H678V239H679V244H680V246H682V245H683V246H685V247H687V249H688V250H689V249H690V250H694V249H695V248H696V250H699V249H700V248H701V250H702V249H704V248H705V250H706V251H709V250H710V249H711V250H714V251H716V249H717V250H723V249H724V250H726V249H727V250H728V251H733V250H734V251H736V252H750V251H751V252H752V251H753V250H754V251H755V252H756V251H761V249H762V250H763V251H765V250H766V251H767V250H771V248H772V249H773V250H774V249H776V250H777V249H778V248H779V250H782V251H784V250H785V251H786V252H787V251H788V252H801V253H802V252H805V253H806V252H807V251H808V252H810V253H811V252H813V253H818V252H820V253H854V254H862V255H854V256H853V255H852V256H820V257H819V256H814V257H806V258H804V257H803V256H800V257H793V256H790V257H786V258H784V259H782V258H781V259H779V261H778V259H777V260H776V258H774V259H771V261H770V259H769V260H768V259H766V260H765V258H764V259H761V258H757V257H755V258H753V257H752V258H751V257H750V258H748V257H737V256H736V258H735V259H734V258H731V259H728V258H726V259H725V258H723V259H722V258H719V259H712V260H710V258H709V259H708V258H705V259H704V260H701V259H700V261H699V260H695V259H694V258H691V259H689V260H688V261H687V260H685V261H684V264H683V267H682V265H681V266H679V269H678V265H677V268H674V269H673V264H672V266H671V270H669V266H668V267H667V265H666V268H665V264H663V263H662V264H660V263H659V262H658V260H657V261H656V262H655V259H654V260H653V259H651V260H650V261H649V259H647V260H645V259H642V260H640V258H639V259H636V256H615V257H611V259H610V258H606V259H605V260H604V261H602V263H601V265H600V268H599V274H598V268H597V274H596V270H595V273H594V277H593V273H592V277H591V271H590V266H588V265H587V267H586V266H585V268H584V270H583V265H580V262H578V264H576V261H575V262H574V263H572V262H571V261H570V262H566V267H565V272H564V267H562V264H560V263H558V262H556V261H553V263H551V260H550V262H549V263H548V264H547V262H546V263H545V262H544V263H543V262H541V259H540V260H539V261H538V260H536V263H535V267H534V263H532V262H530V263H529V262H527V261H526V262H525V261H523V263H522V266H521V267H520V265H519V268H518V270H517V271H516V277H515V273H514V277H513V273H512V271H511V278H510V275H509V272H507V278H506V274H505V275H504V272H503V270H502V269H501V266H500V267H499V266H498V267H497V272H496V269H495V270H494V280H493V270H492V274H491V273H490V278H489V274H488V282H487V277H486V274H485V270H484V273H483V272H482V274H481V272H480V268H478V264H476V265H475V266H474V267H473V269H472V266H471V265H470V262H469V263H468V262H466V267H465V274H464V267H463V265H462V266H461V265H459V266H458V265H455V268H454V266H453V264H452V265H451V266H450V269H449V265H448V268H447V269H446V268H445V269H444V266H443V270H442V268H441V269H440V271H439V270H438V269H437V267H436V266H434V265H432V268H430V267H429V264H428V260H427V258H426V260H425V259H423V260H422V262H421V265H420V262H418V263H416V262H415V265H414V263H413V264H412V266H411V265H409V262H407V269H406V276H405V270H404V262H403V264H402V261H399V262H398V261H395V260H393V261H392V260H391V261H390V263H389V264H388V268H387V264H386V261H384V262H382V265H381V264H379V265H378V266H377V261H375V260H374V259H371V260H366V261H365V260H364V259H363V261H362V260H361V261H360V260H358V259H357V261H355V262H354V263H353V267H352V263H351V261H349V262H348V263H347V262H346V263H345V261H344V262H343V261H342V259H341V257H326V260H325V259H323V261H322V259H319V258H318V259H317V261H316V260H314V259H311V258H307V259H304V260H303V259H302V260H299V259H298V260H297V259H296V260H294V261H293V260H292V261H290V263H289V266H288V263H287V262H286V263H284V264H283V262H281V264H280V267H279V263H278V265H276V264H275V265H272V264H269V265H268V260H266V258H264V259H263V258H253V259H252V258H249V260H247V263H246V262H245V263H244V264H243V268H242V266H241V268H240V269H238V268H237V265H236V267H234V268H233V272H232V265H231V268H230V270H229V269H228V271H227V274H225V267H224V266H223V265H222V262H221V264H220V263H219V265H218V264H217V265H216V264H214V263H213V262H212V261H211V260H209V259H208V260H207V259H205V258H204V260H201V259H200V256H193V258H187V257H184V258H183V257H180V258H177V257H176V259H171V258H170V259H167V260H166V259H165V261H164V259H163V260H162V258H161V257H160V258H159V260H158V262H157V260H156V258H153V260H152V262H151V260H150V255H137Z"/><path fill="#ffad45" d="M137 254H151V253H152V252H154V253H162V252H164V253H165V252H176V253H193V254H200V252H202V253H203V252H212V251H213V250H216V251H217V250H222V251H223V250H227V249H236V248H237V249H238V250H240V249H243V250H244V251H248V252H250V253H260V252H261V253H264V252H265V253H266V252H269V251H270V250H272V251H274V250H275V251H276V250H277V251H281V250H282V251H284V250H286V251H290V252H304V253H305V252H306V253H314V252H326V253H341V252H342V251H348V252H350V251H353V252H354V251H357V252H359V251H360V252H366V251H367V252H373V251H374V252H377V250H379V251H387V252H388V251H391V252H392V251H393V252H398V251H402V250H403V251H404V250H408V251H411V250H412V251H413V250H415V251H417V250H420V251H423V252H425V253H427V251H429V249H430V248H432V249H433V250H434V249H435V248H436V250H437V247H438V249H439V248H442V249H443V248H445V249H447V248H448V249H452V248H453V250H454V249H456V250H459V249H460V250H461V251H465V250H466V251H468V250H473V251H474V249H475V250H476V249H478V248H480V249H481V248H482V246H483V248H484V246H485V247H486V248H487V245H488V246H489V247H490V246H491V245H492V246H493V247H496V248H497V247H498V248H499V249H500V250H501V248H502V247H503V245H506V246H507V248H508V246H509V247H510V245H513V247H514V246H515V247H516V246H517V248H518V249H519V248H520V250H521V249H522V250H524V251H525V252H529V251H531V250H532V251H538V252H542V251H550V252H552V251H554V252H557V251H558V252H559V251H562V250H563V249H564V251H571V250H572V251H573V250H581V251H582V249H583V250H584V249H585V250H586V248H589V249H590V248H591V247H592V249H593V247H594V248H596V247H597V249H598V248H599V249H600V251H601V250H602V251H603V252H605V253H606V252H607V253H617V254H636V253H637V252H638V253H640V252H649V253H650V252H655V251H656V252H657V251H663V250H664V251H667V250H669V249H670V250H671V249H672V250H683V251H685V252H686V251H688V252H692V253H693V252H694V253H695V252H696V253H697V252H699V253H700V252H705V253H706V252H707V253H709V252H712V253H718V252H719V253H723V252H725V253H731V252H732V253H735V252H736V253H764V252H772V253H773V252H779V253H780V252H784V253H813V254H862V255H813V256H784V257H780V256H779V257H773V256H772V257H764V256H736V257H735V256H732V257H731V256H725V257H723V256H719V257H718V256H712V257H709V256H707V257H706V256H705V257H700V256H699V257H697V256H696V257H695V256H694V257H693V256H692V257H688V258H686V257H685V258H683V259H672V260H671V259H670V260H669V259H667V258H664V259H663V258H657V257H656V258H655V257H650V256H649V257H640V256H638V257H637V256H636V255H617V256H607V257H606V256H605V257H603V258H602V259H601V258H600V260H599V261H598V260H597V262H596V261H594V262H593V260H592V262H591V261H590V260H589V261H586V259H585V260H584V259H583V260H582V258H581V259H573V258H572V259H571V258H564V260H563V259H562V258H559V257H558V258H557V257H554V258H552V257H550V258H542V257H538V258H532V259H531V258H529V257H525V258H524V259H522V260H521V259H520V261H519V260H518V261H517V263H516V262H515V263H514V262H513V264H510V262H509V263H508V261H507V263H506V264H503V262H502V261H501V259H500V260H499V261H498V262H497V261H496V262H493V263H492V264H491V263H490V262H489V263H488V264H487V261H486V262H485V263H484V261H483V263H482V261H481V260H480V261H478V260H476V259H475V260H474V258H473V259H468V258H466V259H465V258H461V259H460V260H459V259H456V260H454V259H453V261H452V260H448V261H447V260H445V261H443V260H442V261H439V260H438V262H437V259H436V261H435V260H434V259H433V260H432V261H430V260H429V258H427V256H425V257H423V258H420V259H417V258H415V259H413V258H412V259H411V258H408V259H404V258H403V259H402V258H398V257H393V258H392V257H391V258H388V257H387V258H379V259H377V257H374V258H373V257H367V258H366V257H360V258H359V257H357V258H354V257H353V258H350V257H348V258H342V257H341V256H326V257H314V256H306V257H305V256H304V257H290V258H286V259H284V258H282V259H281V258H277V259H276V258H275V259H274V258H272V259H270V258H269V257H266V256H265V257H264V256H261V257H260V256H250V257H248V258H244V259H243V260H240V259H238V260H237V261H236V260H227V259H223V258H222V259H217V258H216V259H213V258H212V257H203V256H202V257H200V255H193V256H176V257H165V256H164V257H162V256H154V257H152V256H151V255H137Z"/><path fill="#fe9730" d="M137 345H150V342H151V340H152V341H155V342H156V341H157V340H158V342H159V344H161V343H162V342H165V343H166V342H167V343H169V342H170V343H172V342H174V343H175V342H176V343H179V344H180V343H193V344H204V342H206V341H209V339H211V337H212V338H213V339H214V340H215V341H217V339H218V337H219V339H220V340H221V338H222V336H223V337H224V334H225V335H227V336H228V335H229V336H230V332H231V334H232V336H234V335H235V337H236V333H237V337H238V339H240V340H241V338H242V339H246V340H247V341H248V340H249V342H250V341H252V342H253V341H255V342H256V343H259V342H260V341H262V340H263V338H264V339H265V335H266V339H268V338H269V339H272V337H273V338H274V339H277V340H278V339H279V338H280V335H282V333H284V337H285V335H286V338H287V341H291V340H293V341H294V342H295V340H296V341H297V342H300V343H301V342H311V341H312V342H314V341H315V339H316V337H317V340H318V342H322V343H323V342H325V343H333V342H334V343H339V344H341V342H342V340H343V339H345V338H346V337H347V336H348V337H349V338H350V335H351V338H352V340H353V339H354V340H355V339H356V341H357V340H362V341H366V340H367V341H369V340H370V341H371V339H372V340H375V341H376V338H377V337H378V339H380V338H381V334H382V337H383V336H384V337H385V338H387V340H388V336H389V337H390V339H391V338H393V339H394V340H397V339H400V340H401V339H403V338H404V333H405V328H406V332H407V338H408V336H409V335H410V337H411V335H412V336H414V337H415V338H416V336H417V335H418V336H419V338H420V337H421V338H423V336H424V335H425V337H426V343H427V337H428V332H429V333H430V334H431V335H432V333H433V332H434V334H435V330H436V332H437V335H438V336H439V337H440V334H441V337H442V335H443V337H444V335H445V336H446V337H447V334H449V330H450V333H451V335H452V333H454V335H455V334H456V333H458V331H459V334H460V335H463V336H465V332H466V333H467V334H468V335H469V333H471V334H472V333H474V334H475V333H476V336H477V335H478V330H479V331H480V332H481V331H482V333H483V332H484V334H485V330H486V327H487V320H488V328H489V327H490V326H491V331H492V323H493V331H494V333H495V330H496V327H497V329H498V330H500V333H501V326H502V328H503V334H504V335H505V334H507V329H508V323H509V330H510V337H511V335H512V336H513V337H516V339H517V337H518V338H521V337H522V338H523V337H524V338H525V337H526V338H527V337H528V339H531V337H532V338H533V337H535V339H536V340H544V339H546V337H547V339H548V340H549V341H550V340H552V339H553V340H554V339H555V338H556V339H558V340H561V333H562V329H563V333H564V338H565V339H567V340H569V339H571V337H572V336H573V338H576V336H578V337H579V336H580V335H581V336H583V335H584V333H585V335H586V333H587V332H588V334H589V331H591V332H592V331H593V325H594V330H596V329H598V334H600V339H601V340H602V342H608V343H613V344H637V342H638V341H639V342H641V341H642V342H643V341H645V340H646V341H647V340H648V341H651V340H652V339H655V340H656V339H657V340H658V338H660V336H662V338H663V337H664V335H665V334H666V336H667V338H668V334H669V329H670V334H671V337H672V335H673V339H674V340H675V339H676V338H679V335H680V338H681V341H683V339H684V341H686V340H687V341H688V340H690V341H691V340H693V341H694V340H699V341H700V339H702V340H703V341H704V340H705V338H706V340H707V341H708V340H709V341H710V339H711V341H719V342H723V341H725V342H726V341H727V342H729V343H730V342H733V343H734V342H736V343H738V344H739V343H747V344H749V343H754V342H755V343H766V342H768V343H769V342H771V341H772V339H773V341H774V342H778V341H779V343H783V342H784V343H793V344H794V343H796V342H797V343H798V344H799V343H803V344H804V343H810V344H811V343H822V344H854V345H862V346H855V347H818V348H813V347H812V348H794V347H793V348H787V349H786V348H776V349H774V350H773V352H772V350H770V349H769V348H768V349H767V350H766V348H761V349H760V348H759V347H757V348H754V349H753V348H747V347H746V348H745V347H744V348H738V349H737V348H735V349H732V348H731V349H725V350H724V349H719V350H718V349H717V350H712V349H711V350H707V351H706V353H705V352H704V351H703V350H698V351H696V350H693V351H692V350H690V351H687V349H686V350H682V351H681V353H680V356H679V353H675V352H674V351H672V353H671V357H670V362H669V357H668V355H667V356H665V354H664V352H663V353H662V354H661V352H659V351H658V352H657V353H656V352H655V354H654V350H652V352H648V350H644V349H642V350H640V349H639V348H637V347H615V348H614V347H613V348H608V349H607V350H606V349H605V350H602V352H600V356H599V358H598V363H597V360H596V357H595V361H594V366H593V361H592V359H591V357H590V356H588V355H587V356H586V355H585V358H584V359H582V357H581V356H579V353H578V355H577V357H576V355H572V354H571V356H570V351H568V352H567V351H566V352H565V351H564V357H563V364H562V358H561V352H560V350H558V351H557V353H556V351H555V350H553V352H552V351H549V350H548V351H546V350H545V351H544V350H543V351H542V349H541V350H540V351H539V350H538V351H536V355H535V353H534V352H533V354H532V353H531V354H530V355H529V357H528V354H527V353H526V354H525V353H524V355H523V353H521V352H519V354H516V353H515V355H512V356H511V357H510V362H509V369H508V362H507V356H506V360H505V361H504V359H502V358H501V357H500V361H499V362H498V361H497V363H496V362H495V361H494V359H493V363H492V361H490V359H489V363H488V371H487V364H486V358H485V359H484V360H483V363H482V361H481V359H480V356H479V359H478V358H477V356H476V358H474V359H472V357H471V359H468V361H467V357H466V359H465V355H464V356H463V355H462V357H459V356H458V355H457V356H456V357H454V356H453V355H452V356H451V354H450V356H448V355H447V354H446V356H445V355H444V357H442V354H441V356H440V357H439V361H438V358H437V357H436V358H433V356H432V360H431V358H430V359H429V360H428V354H427V348H426V356H425V354H424V355H422V354H421V355H420V356H419V358H418V357H417V354H416V353H415V354H414V356H413V359H412V353H410V354H409V355H408V353H407V359H406V364H405V359H404V353H403V352H402V351H401V350H400V351H398V352H396V351H395V350H394V352H393V350H392V352H391V351H388V352H387V351H386V352H385V355H383V353H382V354H381V353H380V354H377V352H376V350H375V352H374V351H373V352H372V350H371V351H365V352H364V350H363V351H362V352H361V350H360V351H359V350H358V352H357V350H356V351H355V352H353V353H351V356H350V353H349V354H348V353H347V354H346V353H344V350H342V349H341V348H332V347H331V348H326V349H325V348H322V349H321V348H320V349H319V350H318V351H317V354H316V352H315V349H314V350H311V349H299V350H298V349H297V350H296V349H295V350H290V351H288V352H287V353H286V356H285V354H283V356H282V359H281V357H280V356H279V354H278V352H277V353H275V352H274V353H272V351H271V352H270V351H269V353H268V355H265V352H264V351H263V352H262V351H261V350H260V349H253V350H252V351H251V350H249V352H248V351H247V352H246V351H245V352H244V353H242V352H241V355H240V356H238V354H237V353H235V355H231V359H230V355H229V354H228V355H227V356H226V360H225V361H224V356H223V354H222V353H221V351H220V352H219V354H218V352H217V350H214V351H212V352H210V351H209V352H207V350H205V349H204V347H193V348H189V347H188V348H187V347H186V348H179V349H178V348H175V349H172V348H170V349H166V348H165V349H163V348H161V347H160V348H159V350H158V351H157V350H156V349H153V350H152V351H151V350H150V346H137Z"/><path fill="#ffad45" d="M137 345H151V344H193V345H204V344H208V343H221V342H225V340H226V341H227V340H228V341H230V342H231V340H232V341H233V340H234V342H235V341H236V342H237V341H239V342H241V343H243V342H245V343H251V344H252V343H253V344H260V343H264V342H267V343H268V342H269V343H271V342H272V343H274V342H275V343H276V342H278V341H279V342H280V341H281V342H282V341H283V342H286V343H287V342H289V343H297V344H309V343H313V344H314V343H315V344H316V343H318V344H342V343H344V342H345V341H346V342H350V343H360V344H361V343H367V344H368V343H371V344H372V343H376V342H379V341H381V342H386V343H388V342H389V343H391V342H392V343H396V342H397V343H398V342H400V343H402V342H403V343H404V342H407V341H408V342H409V341H410V342H411V341H413V342H414V341H415V342H418V341H420V342H421V341H425V342H426V344H427V343H428V341H429V340H430V341H438V342H439V341H441V340H442V341H446V342H449V341H451V340H452V341H453V342H455V340H457V341H458V340H459V341H460V340H462V341H466V340H468V341H470V340H471V341H472V340H474V341H478V340H481V339H485V338H486V339H487V338H489V339H490V338H492V340H493V339H495V338H497V339H498V340H505V339H506V340H508V341H510V340H512V342H513V341H514V342H519V341H520V342H521V341H522V342H523V341H524V342H525V343H526V342H536V343H563V342H564V343H566V342H569V343H570V342H571V341H572V342H574V341H578V340H579V341H580V340H584V341H586V340H587V339H588V340H589V341H590V340H591V339H594V340H595V339H596V340H598V339H599V341H600V342H601V343H603V344H614V345H615V344H616V345H637V344H644V343H647V344H648V343H649V344H650V343H653V342H654V343H658V342H664V341H667V342H668V341H669V342H677V343H698V344H699V343H704V344H705V343H710V344H711V343H713V344H820V345H821V344H824V345H862V346H824V347H821V346H820V347H713V348H711V347H710V348H705V347H704V348H699V347H698V348H677V349H669V350H668V349H667V350H664V349H658V348H654V349H653V348H650V347H649V348H648V347H647V348H644V347H637V346H616V347H615V346H614V347H603V348H601V349H600V350H599V352H598V351H596V352H595V351H594V352H591V351H590V350H589V351H588V352H587V351H586V350H584V351H580V350H579V351H578V350H574V349H572V350H571V349H570V348H569V349H566V348H564V349H563V348H536V349H526V348H525V349H524V350H523V349H522V350H521V349H520V350H519V349H514V350H513V349H512V351H510V350H508V351H506V352H505V351H498V352H497V353H495V352H493V351H492V353H490V352H489V353H487V352H486V353H485V352H481V351H478V350H474V351H472V350H471V351H470V350H468V351H466V350H462V351H460V350H459V351H458V350H457V351H455V349H453V350H452V351H451V350H449V349H446V350H442V351H441V350H439V349H438V350H430V351H429V350H428V348H427V347H426V349H425V350H421V349H420V350H418V349H415V350H414V349H413V350H411V349H410V350H409V349H408V350H407V349H404V348H403V349H402V348H400V349H398V348H397V349H396V348H392V349H391V348H389V349H388V348H386V349H381V350H379V349H376V348H372V347H371V348H368V347H367V348H361V347H360V348H350V349H346V350H345V349H344V348H342V347H318V348H316V347H315V348H314V347H313V348H309V347H297V348H289V349H287V348H286V349H283V350H282V349H281V350H280V349H279V350H278V349H276V348H275V349H274V348H272V349H271V348H269V349H268V348H267V349H264V348H260V347H253V348H252V347H251V348H245V349H243V348H241V349H239V350H237V349H236V350H235V349H234V351H233V350H232V351H231V349H230V350H228V351H227V350H226V351H225V349H221V348H208V347H204V346H193V347H151V346H137Z"/></svg><div class="a" style="left:5px;top:393px;width:864px;height:40px;background:#000"></div><div class="a" style="left:6px;top:394px;width:95px;height:37px;background:#3f3f3f"></div><div class="a" style="left:102px;top:394px;width:35px;height:37px;background:#3f3f3f;border-left:1px solid #a9a9a9;border-top:1px solid #a9a9a9"></div><div class="a" style="left:137px;top:394px;width:730px;height:37px;background:#606060"></div><div class="a" style="left:7px;top:396px;width:15px;height:15px;background:#555;border-radius:2px"></div><svg class="a" style="left:11px;top:399px" width="10" height="10"><path d="M1 1L8.5 8.5M8.5 1L1 8.5" stroke="#f6ddb0" stroke-width="1.3"/></svg><div class="a" style="left:26px;top:396px;width:75px;height:15px;background:#555;border-radius:2px"></div><div class="a" style="left:27px;top:397px;white-space:nowrap;font-size:11px;line-height:12px;color:#f6ddb0">Label Track</div><svg class="a" style="left:87px;top:399px" width="12" height="8"><path d="M0 0H12L6 7Z" fill="#f6ddb0"/></svg><div class="a" style="left:7px;top:414px;width:75px;height:16px;background:#555;border-radius:2px"></div><svg class="a" style="left:38px;top:419px" width="12" height="7"><path d="M0 7H12L6 1Z" fill="#f6ddb0"/></svg><div class="a" style="left:152px;top:394px;width:1px;height:16px;background:#111"></div><div class="a" style="left:152px;top:427px;width:1px;height:4px;background:#111"></div><svg class="a" style="left:144px;top:409px" width="17" height="19"><path d="M6 1.8L3.2 5.8V12.6L6 16.6M11.2 1.8L14 5.8V12.6L11.2 16.6" fill="none" stroke="#111" stroke-width="3.6" stroke-linejoin="round"/><path d="M6 1.8L3.2 5.8V12.6L6 16.6M11.2 1.8L14 5.8V12.6L11.2 16.6" fill="none" stroke="#ffb540" stroke-width="1.8"/><circle cx="8.6" cy="9.2" r="4" fill="#ffb540" stroke="#111" stroke-width="1"/></svg><div class="a" style="left:160px;top:398px;width:66px;height:21px;background:#ffd397;border:1px solid #000;font-size:16px;line-height:19px;padding-left:6px;color:#111;white-space:nowrap">Track 1</div><div class="a" style="left:633px;top:394px;width:1px;height:16px;background:#111"></div><div class="a" style="left:633px;top:427px;width:1px;height:4px;background:#111"></div><svg class="a" style="left:625px;top:409px" width="17" height="19"><path d="M6 1.8L3.2 5.8V12.6L6 16.6M11.2 1.8L14 5.8V12.6L11.2 16.6" fill="none" stroke="#111" stroke-width="3.6" stroke-linejoin="round"/><path d="M6 1.8L3.2 5.8V12.6L6 16.6M11.2 1.8L14 5.8V12.6L11.2 16.6" fill="none" stroke="#ffb540" stroke-width="1.8"/><circle cx="8.6" cy="9.2" r="4" fill="#ffb540" stroke="#111" stroke-width="1"/></svg><div class="a" style="left:641px;top:398px;width:66px;height:21px;background:#ffd397;border:1px solid #000;font-size:16px;line-height:19px;padding-left:6px;color:#111;white-space:nowrap">Track 2</div><div class="a" style="left:873px;top:207px;width:17px;height:265px;background:#f0f0f0"></div><div class="a" style="left:874px;top:223px;width:15px;height:231px;background:#cdcdcd"></div><svg class="a" style="left:875px;top:211px" width="13" height="10"><path d="M2.5 7L6.5 3L10.5 7" fill="none" stroke="#606060" stroke-width="2"/></svg><svg class="a" style="left:875px;top:459px" width="13" height="10"><path d="M2.5 3L6.5 7L10.5 3" fill="none" stroke="#606060" stroke-width="2"/></svg><div class="a" style="left:137px;top:472px;width:736px;height:17px;background:#f0f0f0"></div><div class="a" style="left:154px;top:473px;width:565px;height:15px;background:#cdcdcd"></div><svg class="a" style="left:140px;top:474px" width="10" height="13"><path d="M7 2.5L3 6.5L7 10.5" fill="none" stroke="#606060" stroke-width="2"/></svg><svg class="a" style="left:860px;top:474px" width="10" height="13"><path d="M3 2.5L7 6.5L3 10.5" fill="none" stroke="#606060" stroke-width="2"/></svg><div class="a" style="left:1px;top:489px;width:889px;height:1px;background:#1e1e1e"></div><div class="grab" style="left:2px;top:490px;height:54px"></div><div class="a" style="left:18px;top:500px;white-space:nowrap;font-size:12px;line-height:13px;color:#f6ddb0">Project Rate (Hz):</div><div class="a" style="left:119px;top:498px;width:1px;height:17px;background:#c8c8c8"></div><div class="a" style="left:119px;top:522px;width:1px;height:17px;background:#c8c8c8"></div><div class="a" style="left:205px;top:498px;width:1px;height:17px;background:#c8c8c8"></div><div class="a" style="left:205px;top:522px;width:1px;height:17px;background:#c8c8c8"></div><div class="a" style="left:366px;top:498px;width:1px;height:17px;background:#c8c8c8"></div><div class="a" style="left:366px;top:522px;width:1px;height:17px;background:#c8c8c8"></div><div class="a" style="left:18px;top:519px;width:80px;height:23px;background:#fff;border:1px solid #7a7a7a;font-size:12px;line-height:21px;padding-left:5px;color:#000">44100</div><div class="chev" style="left:85px;top:525px"></div><div class="a" style="left:126px;top:500px;white-space:nowrap;font-size:12.4px;line-height:13px;color:#f6ddb0">Snap-To</div><div class="combo" style="left:126px;top:519px;width:73px;height:23px;font-size:12px;line-height:21px;padding-left:4px">Off</div><div class="chev" style="left:185px;top:525px"></div><div class="a" style="left:212px;top:500px;white-space:nowrap;font-size:12.4px;line-height:13px;color:#f6ddb0">Audio Position</div><div class="combo" style="left:373px;top:495px;width:300px;height:23px;font-size:11.4px;line-height:21px;padding-left:3px">Start and End of Selection</div><div class="chev" style="left:660px;top:501px"></div><div class="a" style="left:212px;top:519px;width:148px;height:22px;background:#bcbcbc;border-top:1px solid #9a9a9a;border-left:1px solid #9a9a9a;border-right:1px solid #fff;border-bottom:1px solid #fff"></div><div class="a" style="left:213px;top:520px;width:146px;height:1px;background:#d4d4d4"></div><div class="a" style="left:215px;top:522px;width:10px;height:16px;background:#a8a8a8"></div><div class="a" style="left:215px;top:523px;width:10px;text-align:center;font-size:13.5px;line-height:16px;color:#1414b8">0</div><div class="a" style="left:225px;top:522px;width:10px;height:16px;background:#a8a8a8"></div><div class="a" style="left:225px;top:523px;width:10px;text-align:center;font-size:13.5px;line-height:16px;color:#1414b8">0</div><div class="a" style="left:235px;top:523px;width:13px;text-align:center;font-size:13.5px;line-height:16px;color:#1414b8">h</div><div class="a" style="left:248px;top:522px;width:10px;height:16px;background:#a8a8a8"></div><div class="a" style="left:248px;top:523px;width:10px;text-align:center;font-size:13.5px;line-height:16px;color:#1414b8">0</div><div class="a" style="left:258px;top:522px;width:10px;height:16px;background:#a8a8a8"></div><div class="a" style="left:258px;top:523px;width:10px;text-align:center;font-size:13.5px;line-height:16px;color:#1414b8">2</div><div class="a" style="left:268px;top:523px;width:17px;text-align:center;font-size:13.5px;line-height:16px;color:#1414b8">m</div><div class="a" style="left:285px;top:522px;width:10px;height:16px;background:#a8a8a8"></div><div class="a" style="left:285px;top:523px;width:10px;text-align:center;font-size:13.5px;line-height:16px;color:#1414b8">2</div><div class="a" style="left:295px;top:522px;width:10px;height:16px;background:#a8a8a8"></div><div class="a" style="left:295px;top:523px;width:10px;text-align:center;font-size:13.5px;line-height:16px;color:#1414b8">3</div><div class="a" style="left:305px;top:523px;width:3px;text-align:center;font-size:13.5px;line-height:16px;color:#1414b8">.</div><div class="a" style="left:308px;top:522px;width:10px;height:16px;background:#a8a8a8"></div><div class="a" style="left:308px;top:523px;width:10px;text-align:center;font-size:13.5px;line-height:16px;color:#1414b8">6</div><div class="a" style="left:318px;top:522px;width:10px;height:16px;background:#a8a8a8"></div><div class="a" style="left:318px;top:523px;width:10px;text-align:center;font-size:13.5px;line-height:16px;color:#1414b8">5</div><div class="a" style="left:328px;top:522px;width:10px;height:16px;background:#a8a8a8"></div><div class="a" style="left:328px;top:523px;width:10px;text-align:center;font-size:13.5px;line-height:16px;color:#1414b8">3</div><div class="a" style="left:338px;top:523px;width:11px;text-align:center;font-size:13.5px;line-height:16px;color:#1414b8">s</div><div class="a" style="left:349px;top:520px;width:10px;height:19px;background:#b8b8b8;border-top:1px solid #a0a0a0;border-right:2px solid #000;border-bottom:2px solid #000"></div><svg class="a" style="left:349px;top:527px" width="9" height="7"><path d="M0.5 1H8.5L4.5 5.5Z" fill="#000"/></svg><div class="a" style="left:373px;top:519px;width:148px;height:22px;background:#bcbcbc;border-top:1px solid #9a9a9a;border-left:1px solid #9a9a9a;border-right:1px solid #fff;border-bottom:1px solid #fff"></div><div class="a" style="left:374px;top:520px;width:146px;height:1px;background:#d4d4d4"></div><div class="a" style="left:376px;top:522px;width:10px;height:16px;background:#a8a8a8"></div><div class="a" style="left:376px;top:523px;width:10px;text-align:center;font-size:13.5px;line-height:16px;color:#1414b8">0</div><div class="a" style="left:386px;top:522px;width:10px;height:16px;background:#a8a8a8"></div><div class="a" style="left:386px;top:523px;width:10px;text-align:center;font-size:13.5px;line-height:16px;color:#1414b8">0</div><div class="a" style="left:396px;top:523px;width:13px;text-align:center;font-size:13.5px;line-height:16px;color:#1414b8">h</div><div class="a" style="left:409px;top:522px;width:10px;height:16px;background:#a8a8a8"></div><div class="a" style="left:409px;top:523px;width:10px;text-align:center;font-size:13.5px;line-height:16px;color:#1414b8">0</div><div class="a" style="left:419px;top:522px;width:10px;height:16px;background:#a8a8a8"></div><div class="a" style="left:419px;top:523px;width:10px;text-align:center;font-size:13.5px;line-height:16px;color:#1414b8">2</div><div class="a" style="left:429px;top:523px;width:17px;text-align:center;font-size:13.5px;line-height:16px;color:#1414b8">m</div><div class="a" style="left:446px;top:522px;width:10px;height:16px;background:#a8a8a8"></div><div class="a" style="left:446px;top:523px;width:10px;text-align:center;font-size:13.5px;line-height:16px;color:#1414b8">2</div><div class="a" style="left:456px;top:522px;width:10px;height:16px;background:#a8a8a8"></div><div class="a" style="left:456px;top:523px;width:10px;text-align:center;font-size:13.5px;line-height:16px;color:#1414b8">3</div><div class="a" style="left:466px;top:523px;width:3px;text-align:center;font-size:13.5px;line-height:16px;color:#1414b8">.</div><div class="a" style="left:469px;top:522px;width:10px;height:16px;background:#a8a8a8"></div><div class="a" style="left:469px;top:523px;width:10px;text-align:center;font-size:13.5px;line-height:16px;color:#1414b8">6</div><div class="a" style="left:479px;top:522px;width:10px;height:16px;background:#a8a8a8"></div><div class="a" style="left:479px;top:523px;width:10px;text-align:center;font-size:13.5px;line-height:16px;color:#1414b8">5</div><div class="a" style="left:489px;top:522px;width:10px;height:16px;background:#a8a8a8"></div><div class="a" style="left:489px;top:523px;width:10px;text-align:center;font-size:13.5px;line-height:16px;color:#1414b8">3</div><div class="a" style="left:499px;top:523px;width:11px;text-align:center;font-size:13.5px;line-height:16px;color:#1414b8">s</div><div class="a" style="left:510px;top:520px;width:10px;height:19px;background:#b8b8b8;border-top:1px solid #a0a0a0;border-right:2px solid #000;border-bottom:2px solid #000"></div><svg class="a" style="left:510px;top:527px" width="9" height="7"><path d="M0.5 1H8.5L4.5 5.5Z" fill="#000"/></svg><div class="a" style="left:526px;top:519px;width:148px;height:22px;background:#bcbcbc;border-top:1px solid #9a9a9a;border-left:1px solid #9a9a9a;border-right:1px solid #fff;border-bottom:1px solid #fff"></div><div class="a" style="left:527px;top:520px;width:146px;height:1px;background:#d4d4d4"></div><div class="a" style="left:529px;top:522px;width:10px;height:16px;background:#a8a8a8"></div><div class="a" style="left:529px;top:523px;width:10px;text-align:center;font-size:13.5px;line-height:16px;color:#1414b8">0</div><div class="a" style="left:539px;top:522px;width:10px;height:16px;background:#a8a8a8"></div><div class="a" style="left:539px;top:523px;width:10px;text-align:center;font-size:13.5px;line-height:16px;color:#1414b8">0</div><div class="a" style="left:549px;top:523px;width:13px;text-align:center;font-size:13.5px;line-height:16px;color:#1414b8">h</div><div class="a" style="left:562px;top:522px;width:10px;height:16px;background:#a8a8a8"></div><div class="a" style="left:562px;top:523px;width:10px;text-align:center;font-size:13.5px;line-height:16px;color:#1414b8">0</div><div class="a" style="left:572px;top:522px;width:10px;height:16px;background:#a8a8a8"></div><div class="a" style="left:572px;top:523px;width:10px;text-align:center;font-size:13.5px;line-height:16px;color:#1414b8">2</div><div class="a" style="left:582px;top:523px;width:17px;text-align:center;font-size:13.5px;line-height:16px;color:#1414b8">m</div><div class="a" style="left:599px;top:522px;width:10px;height:16px;background:#a8a8a8"></div><div class="a" style="left:599px;top:523px;width:10px;text-align:center;font-size:13.5px;line-height:16px;color:#1414b8">3</div><div class="a" style="left:609px;top:522px;width:10px;height:16px;background:#a8a8a8"></div><div class="a" style="left:609px;top:523px;width:10px;text-align:center;font-size:13.5px;line-height:16px;color:#1414b8">6</div><div class="a" style="left:619px;top:523px;width:3px;text-align:center;font-size:13.5px;line-height:16px;color:#1414b8">.</div><div class="a" style="left:622px;top:522px;width:10px;height:16px;background:#a8a8a8"></div><div class="a" style="left:622px;top:523px;width:10px;text-align:center;font-size:13.5px;line-height:16px;color:#1414b8">7</div><div class="a" style="left:632px;top:522px;width:10px;height:16px;background:#a8a8a8"></div><div class="a" style="left:632px;top:523px;width:10px;text-align:center;font-size:13.5px;line-height:16px;color:#1414b8">7</div><div class="a" style="left:642px;top:522px;width:10px;height:16px;background:#a8a8a8"></div><div class="a" style="left:642px;top:523px;width:10px;text-align:center;font-size:13.5px;line-height:16px;color:#1414b8">6</div><div class="a" style="left:652px;top:523px;width:11px;text-align:center;font-size:13.5px;line-height:16px;color:#1414b8">s</div><div class="a" style="left:663px;top:520px;width:10px;height:19px;background:#b8b8b8;border-top:1px solid #a0a0a0;border-right:2px solid #000;border-bottom:2px solid #000"></div><svg class="a" style="left:663px;top:527px" width="9" height="7"><path d="M0.5 1H8.5L4.5 5.5Z" fill="#000"/></svg><div class="a" style="left:1px;top:545px;width:889px;height:1px;background:#111"></div><div class="a" style="left:1px;top:546px;width:889px;height:23px;background:#f0f0f0"></div><div class="a" style="left:10px;top:548px;width:1px;height:20px;background:#d8d8d8"></div><div class="a" style="left:148px;top:548px;width:1px;height:20px;background:#d8d8d8"></div><div class="a" style="left:811px;top:548px;width:1px;height:20px;background:#d8d8d8"></div><div class="a" style="left:15px;top:552px;white-space:nowrap;font-size:11.7px;line-height:13px;color:#000">Stopped.</div><svg class="a" style="left:876px;top:556px" width="12" height="12" fill="#b0b0b0"><rect x="8" y="0" width="2" height="2"/><rect x="4" y="4" width="2" height="2"/><rect x="8" y="4" width="2" height="2"/><rect x="0" y="8" width="2" height="2"/><rect x="4" y="8" width="2" height="2"/><rect x="8" y="8" width="2" height="2"/></svg><div class="a" style="left:0px;top:31px;width:891px;height:539px;border-left:1px solid #1a7fd4;border-right:1px solid #1a7fd4;border-bottom:1px solid #1a7fd4;z-index:50"></div></body></html>
